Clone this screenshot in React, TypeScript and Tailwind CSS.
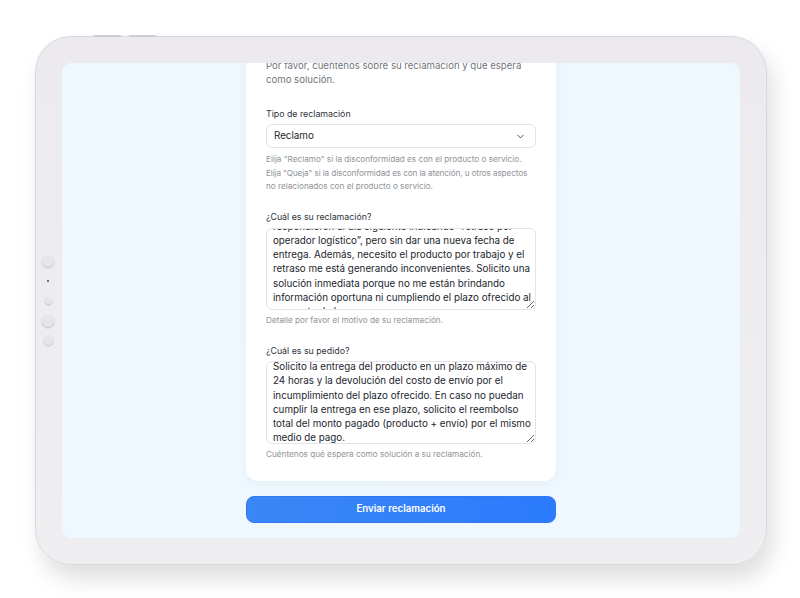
import { useEffect, useRef } from "react";
import { ChevronDown } from "lucide-react";

const reclamo = [
  "El 10 de marzo realicé una compra con entrega en 48 horas,",
  "pero hasta hoy no la recibo. Consulté por el chat y",
  "respondieron al día siguiente indicando “retraso por",
  "operador logístico”, pero sin dar una nueva fecha de",
  "entrega. Además, necesito el producto por trabajo y el",
  "retraso me está generando inconvenientes. Solicito una",
  "solución inmediata porque no me están brindando",
  "información oportuna ni cumpliendo el plazo ofrecido al",
  "momento de la compra.",
].join("\n");

const pedido = [
  "Solicito la entrega del producto en un plazo máximo de",
  "24 horas y la devolución del costo de envío por el",
  "incumplimiento del plazo ofrecido. En caso no puedan",
  "cumplir la entrega en ese plazo, solicito el reembolso",
  "total del monto pagado (producto + envío) por el mismo",
  "medio de pago.",
].join("\n");

function Area({ value, scroll, h }: { value: string; scroll: number; h: string }) {
  const ref = useRef<HTMLTextAreaElement>(null);
  useEffect(() => {
    if (ref.current) ref.current.scrollTop = scroll;
  }, [scroll]);
  return (
    <textarea
      ref={ref}
      readOnly
      wrap="off"
      defaultValue={value}
      className={`block w-full ${h} resize-y overflow-hidden rounded-[6px] border border-[#e3e4e8] bg-white px-[6px] pt-[4px] text-[9.8px] leading-[14.3px] text-[#22262d] outline-none`}
    />
  );
}

function Label({ children }: { children: string }) {
  return <p className="text-[8.8px] leading-[13px] text-[#30343b]">{children}</p>;
}

function Help({ children, className = "" }: { children: React.ReactNode; className?: string }) {
  return <p className={`whitespace-nowrap text-[8.2px] leading-[13px] text-[#909398] ${className}`}>{children}</p>;
}

function Dot({ size }: { size: string }) {
  return <div className={`${size} rounded-full bg-[#e6e5e8] shadow-[0_1px_2px_rgba(0,0,0,0.2)]`} />;
}

export default function App() {
  return (
    <div className="flex h-[598px] w-[800px] items-start justify-center bg-white pt-[36px]" style={{ fontFamily: "Inter, 'Noto Sans', sans-serif" }}>
      {/* tablet */}
      <div className="relative ml-[2px] h-[529px] w-[732px] rounded-[36px] border border-[#d9d8dc] bg-gradient-to-b from-[#eceaee] to-[#efeef1] p-[26px] shadow-[6px_14px_22px_rgba(0,0,0,0.13)]">
        {/* top buttons */}
        <div className="absolute -top-[2px] left-[57px] flex gap-[6px]">
          <div className="h-[2px] w-[29px] rounded-t-sm bg-[#cfcfd3]" />
          <div className="h-[2px] w-[29px] rounded-t-sm bg-[#cfcfd3]" />
        </div>
        {/* side sensors */}
        <div className="absolute left-[6px] top-[218px] flex w-[12px] flex-col items-center">
          <Dot size="h-[12px] w-[12px]" />
          <div className="mt-[13px] h-[2px] w-[2px] rounded-full bg-[#4b4b50]" />
          <div className="mt-[15px]"><Dot size="h-[7px] w-[7px]" /></div>
          <div className="mt-[11px]"><Dot size="h-[12px] w-[12px]" /></div>
          <div className="mt-[9px]"><Dot size="h-[9px] w-[9px]" /></div>
        </div>

        {/* screen */}
        <div className="flex h-full w-full flex-col items-center overflow-hidden rounded-[9px] bg-gradient-to-br from-[#eef8fe] to-[#f0f8ff]">
          <div className="-mt-[20px] w-[310px] rounded-b-[12px] bg-white px-[20px] pb-[20px] pt-[16px] shadow-[0_2px_8px_rgba(30,60,90,0.06)]">
            <p className="text-[9.6px] leading-[14px] text-[#70747b]">
              Por favor, cuéntenos sobre su reclamación y qué espera como solución.
            </p>

            <div className="mt-[20px]">
              <Label>Tipo de reclamación</Label>
              <div className="mt-[4px] flex h-[24px] items-center justify-between rounded-[6px] border border-[#e3e4e8] bg-white pl-[7px] pr-[9px]">
                <span className="text-[9.8px] text-[#22262d]">Reclamo</span>
                <ChevronDown size={11} strokeWidth={2} className="text-[#3b4150]" />
              </div>
              <Help className="mt-[5px]">Elija "Reclamo" si la disconformidad es con el producto o servicio.</Help>
              <Help className="mt-[1px]">
                <span className="tracking-[-0.12px]">Elija "Queja" si la disconformidad es con la atención, u otros aspectos</span>
                <br />
                no relacionados con el producto o servicio.
              </Help>
            </div>

            <div className="mt-[17px]">
              <Label>¿Cuál es su reclamación?</Label>
              <div className="mt-[5px]">
                <Area value={reclamo} scroll={42} h="h-[82px]" />
              </div>
              <Help className="mt-[4px]">Detalle por favor el motivo de su reclamación.</Help>
            </div>

            <div className="mt-[17px]">
              <Label>¿Cuál es su pedido?</Label>
              <div className="mt-[4px]">
                <Area value={pedido} scroll={6} h="h-[83px]" />
              </div>
              <Help className="mt-[4px]">Cuéntenos qué espera como solución a su reclamación.</Help>
            </div>
          </div>

          <button className="mt-[15px] h-[27px] w-[310px] rounded-[8px] border border-[#2f78ee] bg-gradient-to-r from-[#3b86f6] to-[#2c7bfd] text-[9.7px] font-semibold text-white">
            Enviar reclamación
          </button>
        </div>
      </div>
    </div>
  );
}
